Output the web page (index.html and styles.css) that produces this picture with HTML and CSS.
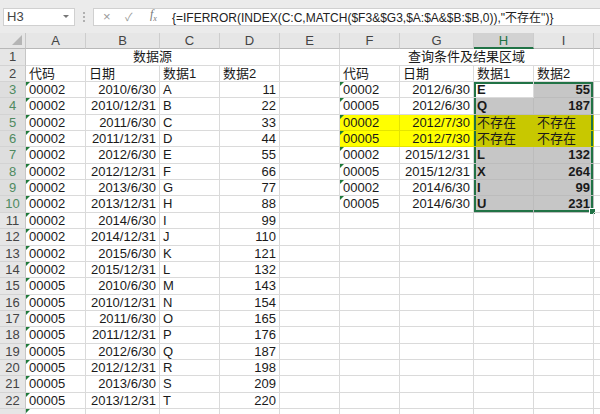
FILE: index.html
```html
<!DOCTYPE html>
<html>
<head>
<meta charset="utf-8">
<link rel="stylesheet" href="styles.css">
</head>
<body>
<div class="fbar">
  <div class="namebox"><span class="nm">H3</span><span class="dd"></span></div>
  <div class="dots"><i></i><i></i><i></i></div>
  <div class="fbox">
    <span class="ic x">×</span>
    <span class="ic ok">✓</span>
    <span class="ic fx"><i>f</i><sub>x</sub></span>
    <span class="ftext">{=IFERROR(INDEX(C:C,MATCH($F3&amp;$G3,$A:$A&amp;$B:$B,0)),"不存在")}</span>
  </div>
</div>
<div class="sheet">
  <div class="corner"></div><div class="ch">A</div><div class="ch">B</div><div class="ch">C</div><div class="ch">D</div><div class="ch">E</div><div class="ch">F</div><div class="ch">G</div><div class="ch on">H</div><div class="ch">I</div><div class="ch"></div>

  <div class="rh">1</div><div class="c ctr s4">数据源</div><div class="c"></div><div class="c ctr s4">查询条件及结果区域</div><div class="c"></div>
  <div class="rh">2</div><div class="c">代码</div><div class="c">日期</div><div class="c">数据1</div><div class="c">数据2</div><div class="c"></div><div class="c">代码</div><div class="c">日期</div><div class="c">数据1</div><div class="c">数据2</div><div class="c"></div>

  <div class="rh hs">3</div><div class="c t">00002</div><div class="c r">2010/6/30</div><div class="c">A</div><div class="c r">11</div><div class="c"></div><div class="c t">00002</div><div class="c r">2012/6/30</div><div class="c b w sl st">E</div><div class="c b r g sr st">55</div><div class="c"></div>
  <div class="rh hs">4</div><div class="c t">00002</div><div class="c r">2010/12/31</div><div class="c">B</div><div class="c r">22</div><div class="c"></div><div class="c t">00005</div><div class="c r">2012/6/30</div><div class="c b g sl">Q</div><div class="c b r g sr">187</div><div class="c"></div>
  <div class="rh hs">5</div><div class="c t">00002</div><div class="c r">2011/6/30</div><div class="c">C</div><div class="c r">33</div><div class="c"></div><div class="c t y">00002</div><div class="c r y">2012/7/30</div><div class="c o sl">不存在</div><div class="c o sr">不存在</div><div class="c"></div>
  <div class="rh hs">6</div><div class="c t">00002</div><div class="c r">2011/12/31</div><div class="c">D</div><div class="c r">44</div><div class="c"></div><div class="c t y">00005</div><div class="c r y">2012/7/30</div><div class="c o sl">不存在</div><div class="c o sr">不存在</div><div class="c"></div>
  <div class="rh hs">7</div><div class="c t">00002</div><div class="c r">2012/6/30</div><div class="c">E</div><div class="c r">55</div><div class="c"></div><div class="c t">00002</div><div class="c r">2015/12/31</div><div class="c b g sl">L</div><div class="c b r g sr">132</div><div class="c"></div>
  <div class="rh hs">8</div><div class="c t">00002</div><div class="c r">2012/12/31</div><div class="c">F</div><div class="c r">66</div><div class="c"></div><div class="c t">00005</div><div class="c r">2015/12/31</div><div class="c b g sl">X</div><div class="c b r g sr">264</div><div class="c"></div>
  <div class="rh hs">9</div><div class="c t">00002</div><div class="c r">2013/6/30</div><div class="c">G</div><div class="c r">77</div><div class="c"></div><div class="c t">00002</div><div class="c r">2014/6/30</div><div class="c b g sl">I</div><div class="c b r g sr">99</div><div class="c"></div>
  <div class="rh hs">10</div><div class="c t">00002</div><div class="c r">2013/12/31</div><div class="c">H</div><div class="c r">88</div><div class="c"></div><div class="c t">00005</div><div class="c r">2014/6/30</div><div class="c b g sl sb">U</div><div class="c b r g sr sb fh">231</div><div class="c"></div>

  <div class="rh">11</div><div class="c t">00002</div><div class="c r">2014/6/30</div><div class="c">I</div><div class="c r">99</div><div class="c"></div><div class="c"></div><div class="c"></div><div class="c"></div><div class="c"></div><div class="c"></div>
  <div class="rh">12</div><div class="c t">00002</div><div class="c r">2014/12/31</div><div class="c">J</div><div class="c r">110</div><div class="c"></div><div class="c"></div><div class="c"></div><div class="c"></div><div class="c"></div><div class="c"></div>
  <div class="rh">13</div><div class="c t">00002</div><div class="c r">2015/6/30</div><div class="c">K</div><div class="c r">121</div><div class="c"></div><div class="c"></div><div class="c"></div><div class="c"></div><div class="c"></div><div class="c"></div>
  <div class="rh">14</div><div class="c t">00002</div><div class="c r">2015/12/31</div><div class="c">L</div><div class="c r">132</div><div class="c"></div><div class="c"></div><div class="c"></div><div class="c"></div><div class="c"></div><div class="c"></div>
  <div class="rh">15</div><div class="c t">00005</div><div class="c r">2010/6/30</div><div class="c">M</div><div class="c r">143</div><div class="c"></div><div class="c"></div><div class="c"></div><div class="c"></div><div class="c"></div><div class="c"></div>
  <div class="rh">16</div><div class="c t">00005</div><div class="c r">2010/12/31</div><div class="c">N</div><div class="c r">154</div><div class="c"></div><div class="c"></div><div class="c"></div><div class="c"></div><div class="c"></div><div class="c"></div>
  <div class="rh">17</div><div class="c t">00005</div><div class="c r">2011/6/30</div><div class="c">O</div><div class="c r">165</div><div class="c"></div><div class="c"></div><div class="c"></div><div class="c"></div><div class="c"></div><div class="c"></div>
  <div class="rh">18</div><div class="c t">00005</div><div class="c r">2011/12/31</div><div class="c">P</div><div class="c r">176</div><div class="c"></div><div class="c"></div><div class="c"></div><div class="c"></div><div class="c"></div><div class="c"></div>
  <div class="rh">19</div><div class="c t">00005</div><div class="c r">2012/6/30</div><div class="c">Q</div><div class="c r">187</div><div class="c"></div><div class="c"></div><div class="c"></div><div class="c"></div><div class="c"></div><div class="c"></div>
  <div class="rh">20</div><div class="c t">00005</div><div class="c r">2012/12/31</div><div class="c">R</div><div class="c r">198</div><div class="c"></div><div class="c"></div><div class="c"></div><div class="c"></div><div class="c"></div><div class="c"></div>
  <div class="rh">21</div><div class="c t">00005</div><div class="c r">2013/6/30</div><div class="c">S</div><div class="c r">209</div><div class="c"></div><div class="c"></div><div class="c"></div><div class="c"></div><div class="c"></div><div class="c"></div>
  <div class="rh">22</div><div class="c t">00005</div><div class="c r">2013/12/31</div><div class="c">T</div><div class="c r">220</div><div class="c"></div><div class="c"></div><div class="c"></div><div class="c"></div><div class="c"></div><div class="c"></div>
  <div class="rh"></div><div class="c t"></div><div class="c"></div><div class="c"></div><div class="c"></div><div class="c"></div><div class="c"></div><div class="c"></div><div class="c"></div><div class="c"></div><div class="c"></div>
</div>
</body>
</html>
```
FILE: styles.css
```css
html, body {
  margin: 0;
  padding: 0;
  width: 600px;
  height: 414px;
  overflow: hidden;
  background: #ffffff;
  font-family: "Liberation Sans", "Noto Sans CJK SC", sans-serif;
}

.fbar {
  height: 33px;
  background: #ebebeb;
  display: flex;
  align-items: center;
  box-sizing: border-box;
  padding: 0 0 0 3px;
}

.namebox {
  width: 72px;
  height: 18px;
  background: #fff;
  border: 1px solid #d0d0d0;
  box-sizing: border-box;
  display: flex;
  align-items: center;
  justify-content: space-between;
  padding: 0 5px 0 3px;
  font-size: 13px;
  color: #444;
}

.dd {
  width: 0;
  height: 0;
  border-left: 3px solid transparent;
  border-right: 3px solid transparent;
  border-top: 3px solid #777;
}

.dots {
  width: 18px;
  display: flex;
  flex-direction: column;
  align-items: center;
  gap: 2px;
}
.dots i {
  width: 2px;
  height: 2px;
  background: #b0b0b0;
}

.fbox {
  flex: 1;
  height: 18px;
  background: #fff;
  border: 1px solid #d0d0d0;
  border-right: none;
  box-sizing: border-box;
  display: flex;
  align-items: center;
  padding-left: 9px;
  color: #222;
}

.ic {
  color: #9a9a9a;
  font-size: 13px;
  line-height: 16px;
}
.ic.x { width: 22px; }
.ic.ok { width: 25px; font-size: 11px; }
.ic.fx { width: 22px; font-family: "Liberation Serif", serif; font-size: 12px; color: #777; }
.ic.fx sub { font-size: 8px; font-style: italic; }

.ftext {
  font-size: 12px;
  white-space: nowrap;
  color: #222;
}

.sheet {
  display: grid;
  grid-template-columns: 26px 60px 74px 60px 60px 60px 60px 74px 60px 60px 1fr;
  grid-template-rows: 16.4px;
  grid-auto-rows: 16.35px;
  font-size: 13px;
  color: #1a1a1a;
}

.corner {
  background: #e6e6e6;
  border-right: 1px solid #c6c6c6;
  border-bottom: 1px solid #b8b8b8;
  box-sizing: border-box;
  position: relative;
}
.corner::after {
  content: "";
  position: absolute;
  right: 3px;
  bottom: 3px;
  border-left: 10px solid transparent;
  border-bottom: 10px solid #b5b5b5;
}

.ch {
  background: #e6e6e6;
  border-right: 1px solid #cdcdcd;
  border-bottom: 1px solid #b8b8b8;
  box-sizing: border-box;
  text-align: center;
  color: #444;
  font-size: 13px;
  line-height: 16px;
}
.ch.on {
  background: #d2d2d2;
  color: #217346;
  border-bottom: 2px solid #217346;
}

.rh {
  background: #e6e6e6;
  border-right: 1px solid #c6c6c6;
  border-bottom: 1px solid #d3d3d3;
  box-sizing: border-box;
  text-align: center;
  color: #444;
  line-height: 16px;
  font-size: 13px;
}
.rh.hs {
  background: #dedede;
  color: #4f8a60;
}

.c {
  border-right: 1px solid #dadada;
  border-bottom: 1px solid #dadada;
  box-sizing: border-box;
  padding: 0 3px;
  line-height: 16px;
  white-space: nowrap;
  overflow: visible;
  position: relative;
}

.s4 { grid-column: span 4; }
.ctr { text-align: center; }
.r { text-align: right; }
.b { font-weight: bold; }

.t::before {
  content: "";
  position: absolute;
  left: 0;
  top: 0;
  border-top: 4px solid #1f7a3a;
  border-right: 4px solid transparent;
}

.y { background: #ffff00; border-right-color: #e4e400; border-bottom-color: #e4e400; }
.g { background: #c6c6c6; border-right-color: #bcbcbc; border-bottom-color: #bcbcbc; }
.o { background: #c8c800; border-right-color: #c8c800; border-bottom-color: #c8c800; }
.w { background: #ffffff; }

.sl { box-shadow: inset 2px 0 0 #217346; }
.sr { box-shadow: inset -2px 0 0 #217346; }
.sl.st { box-shadow: inset 2px 0 0 #217346, inset 0 2px 0 #217346; }
.sr.st { box-shadow: inset -2px 0 0 #217346, inset 0 2px 0 #217346; }
.sl.sb { box-shadow: inset 2px 0 0 #217346, inset 0 -2px 0 #217346; }
.sr.sb { box-shadow: inset -2px 0 0 #217346, inset 0 -2px 0 #217346; }

.fh::after {
  content: "";
  position: absolute;
  right: -3px;
  bottom: -3px;
  width: 5px;
  height: 5px;
  background: #217346;
  border: 1px solid #fff;
}
```
